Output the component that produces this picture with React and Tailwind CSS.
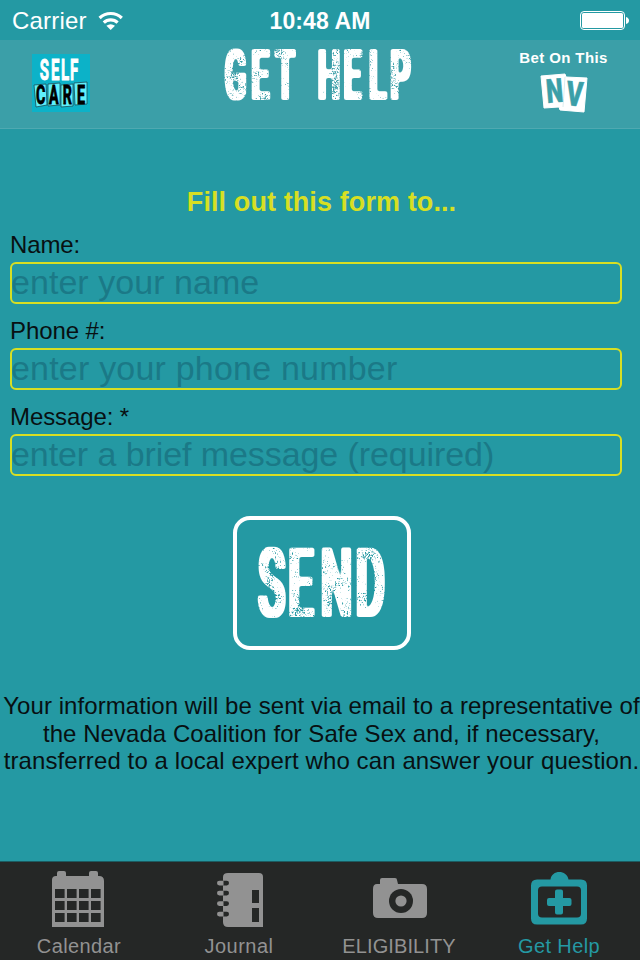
function Distress({ id, radius, seed }) {
  return (
    <filter id={id} x="-5%" y="-10%" width="110%" height="120%" colorInterpolationFilters="sRGB">
      <feMorphology in="SourceGraphic" operator="dilate" radius={radius} result="fat" />
      <feGaussianBlur in="fat" stdDeviation="1" result="soft" />
      <feComponentTransfer in="soft" result="round">
        <feFuncA type="linear" slope="3" intercept="-1" />
      </feComponentTransfer>
      <feTurbulence type="fractalNoise" baseFrequency="0.6" numOctaves="2" seed={seed} result="grain" />
      <feTurbulence type="fractalNoise" baseFrequency="0.07" numOctaves="1" seed={seed} result="patches" />
      <feComposite in="grain" in2="patches" operator="arithmetic" k1="0" k2="4.5" k3="4" k4="-2.7" result="mask" />
      <feComposite in="round" in2="mask" operator="in" />
    </filter>
  );
}

function SelfCareLogo() {
  return (
    <svg width="58" height="58" viewBox="0 0 58 58" className="block overflow-visible" fontFamily="Roboto, sans-serif" fontWeight="700">
      <rect width="58" height="58" fill="#0cb2c8" />
      <text transform="translate(0 26) scale(.5 1)" x="15.5 38 58 76" fontSize="30" fill="#fff" stroke="#fff" strokeWidth="1">SELF</text>
      <g fill="#5ff0fb" stroke="#1b4f59" strokeWidth=".8">
        <path d="M2 31l12-1 1 21-11 2z" />
        <path d="M16 30l12-1 0 22-12 1z" />
        <path d="M29 31l12-1 0 22-12 1z" />
        <path d="M42 29l13-1 0 22-12 1z" />
      </g>
      <text transform="translate(0 50) scale(.57 1)" x="7 30 54 79" fontSize="25" fill="#000" stroke="#000" strokeWidth=".9">CARE</text>
    </svg>
  );
}

function NvLogo() {
  return (
    <svg width="48" height="42" viewBox="0 0 48 42" className="block overflow-visible" fontFamily="Roboto, sans-serif" fontWeight="900">
      <path d="M1 3L25 1l1 3 21 1-3 34-24-2-1-3-15 1z" fill="#fff" stroke="#fff" strokeLinejoin="round" />
      <path d="M25 4l-2 30" stroke="#c4e1e4" strokeWidth=".6" />
      <g fill="#3b9fa8" stroke="#3b9fa8" strokeWidth=".6">
        <text transform="translate(7.2 30) rotate(-5) scale(.72 1)" fontSize="33">N</text>
        <text transform="translate(25.5 32) rotate(5) scale(.73 1)" fontSize="34">V</text>
      </g>
    </svg>
  );
}

function CalendarIcon() {
  return (
    <svg width="54" height="58" viewBox="0 0 54 58" fill="#929292">
      <path d="M1 57V10q0-4 4-4h1V3q0-2 2-2h5q2 0 2 2v3h23V3q0-2 2-2h5q2 0 2 2v3h1q5 0 5 5v46z" />
      <g fill="#252726">
        {[19, 31, 43].map((y) => [4, 16, 28, 40].map((x) => <rect key={x + "-" + y} x={x} y={y} width="9.6" height="9" />))}
      </g>
    </svg>
  );
}

function JournalIcon() {
  return (
    <svg width="46" height="54" viewBox="0 0 46 54">
      <path d="M11 0h31q4 0 4 4v50H11q-5 0-5-5V4q0-4 5-4z" fill="#929292" />
      <g>
        {[10, 20, 30.5, 41].map((y) => (
          <g key={y}>
            <rect x="0" y={y - 2.2} width="12" height="4.6" rx="2.3" fill="#252726" />
            <path d={`M6.5 ${y - 2.2}H2.3a2.3 2.3 0 0 0 0 4.600H6.5z`} fill="#929292" />
          </g>
        ))}
      </g>
      <path d="M35 17h7v13h-7zM35 35h7v14h-7z" fill="#252726" />
    </svg>
  );
}

function CameraIcon() {
  return (
    <svg width="54" height="41" viewBox="0 0 54 41">
      <path d="M4 6h3V2q0-2 2-2h13q2 0 2 2l1 4h24q5 0 5 5v24q0 5-5 5H5q-5 0-5-5V11q0-5 4-5z" fill="#929292" />
      <circle cx="28" cy="23" r="12" fill="#252726" />
      <circle cx="28" cy="23" r="5.6" fill="#929292" />
    </svg>
  );
}

function HelpIcon() {
  return (
    <svg width="56" height="53" viewBox="0 0 56 53" fill="#2499a3">
      <path d="M6 7.500h13.500c1-10 16.500-10 18 0h12.500q6 0 6 6v33q0 6-6 6H6q-6 0-6-6v-33q0-6 6-6z" />
      <rect x="7" y="14.500" width="43" height="31" rx="4" fill="#252726" />
      <path d="M26 17.500h4q2 0 2 2v6.500h6.500q2 0 2 2v4q0 2-2 2H32v6.500q0 2-2 2h-4q-2 0-2-2V34h-6q-2 0-2-2v-4q0-2 2-2h6v-6.500q0-2 2-2z" />
    </svg>
  );
}

function Field({ label, placeholder, spacing }) {
  return (
    <div className="h-[86px]">
      <div className="h-[32px] pt-[1px] text-[24px] leading-[28px] tracking-[-0.1px]">{label}</div>
      <div className={"h-[42px] w-[612px] rounded-md border-2 border-[#d7df23] text-[34px] leading-[37px] whitespace-nowrap text-[#1b7987] " + spacing}>
        <span className="-ml-[1px]">{placeholder}</span>
      </div>
    </div>
  );
}

function Tab({ icon, label, pad, text }) {
  return (
    <div className="flex w-[160px] flex-col items-center">
      <div className={"h-[72px] " + pad}>{icon}</div>
      <div className={"text-[20px] leading-[24px] whitespace-nowrap " + text}>{label}</div>
    </div>
  );
}

export default function App() {
  return (
    <div className="flex h-[960px] w-[640px] flex-col overflow-hidden bg-[#2499a3] font-['Liberation_Sans',Arial,sans-serif] text-[#081012]">
      <div className="grid h-[40px] shrink-0 grid-cols-3 items-center text-white">
        <div className="flex items-center gap-[11px] pl-[12px]">
          <span className="pt-[1px] text-[24px] leading-[40px] tracking-[0.2px]">Carrier</span>
          <svg width="26" height="20" viewBox="0 0 26 20" fill="none" stroke="#fff" strokeWidth="3.2">
            <path d="M1.6 7a16 16 0 0 1 22.2 0M5.8 11.6a10 10 0 0 1 13.8 0" />
            <path d="M12.700 19L8.400 14.800q4.300-3.200 8.600 0z" fill="#fff" stroke="none" />
          </svg>
        </div>
        <div className="pt-[1px] text-center text-[23px] leading-[40px] font-bold tracking-[0.1px] whitespace-nowrap">10:48 AM</div>
        <div className="flex justify-end pr-[10px]">
          <svg width="50" height="19" viewBox="0 0 50 19">
            <rect x=".5" y=".5" width="44" height="18" rx="3.500" fill="none" stroke="#fff" strokeWidth="1" />
            <rect x="2" y="2" width="41" height="15" rx="1.500" fill="#fff" />
            <path d="M46 6q3 1 3 3.500T46 13z" fill="#fff" />
          </svg>
        </div>
      </div>

      <header className="flex h-[89px] shrink-0 items-start border-b border-[#4fa9b1] bg-[#3b9fa8]">
        <div className="w-[215px] pt-[14px] pl-[32px]"><SelfCareLogo /></div>
        <svg width="205" height="80" viewBox="0 0 205 80" className="block overflow-visible">
          <Distress id="title-ink" radius="2 1" seed="4" />
          <g filter="url(#title-ink)">
            <text transform="translate(0 58.500) scale(.45 1)" x="22 81 135 195 229 286 343 390" fontFamily="Roboto, sans-serif" fontSize="69" fontWeight="500" fill="#fff">GET HELP</text>
          </g>
        </svg>
        <div className="flex w-[220px] flex-col items-center pt-[9px] pl-[67px]">
          <div className="text-[15px] leading-[18px] font-bold tracking-[0.4px] whitespace-nowrap text-white">Bet On This</div>
          <div className="pt-[6px]"><NvLogo /></div>
        </div>
      </header>

      <main className="flex h-[732px] shrink-0 flex-col">
        <h1 className="h-[101px] pt-[57px] pl-[3px] text-center text-[27px] leading-[32px] font-bold tracking-[0.1px] text-[#d7df23]">Fill out this form to...</h1>
        <div className="h-[258px] pl-[10px]">
          <Field label="Name:" placeholder="enter your name" spacing="tracking-[0.05px]" />
          <Field label="Phone #:" placeholder="enter your phone number" spacing="tracking-[0.2px]" />
          <Field label="Message: *" placeholder="enter a brief message (required)" spacing="tracking-[-0.08px]" />
        </div>
        <div className="flex h-[176px] justify-center pt-[28px] pl-[4px]">
          <div className="h-[134px] w-[178px] rounded-[17px] border-4 border-white">
            <svg width="170" height="126" viewBox="0 0 170 126" className="block">
              <Distress id="send-ink" radius="3 1" seed="9" />
              <g filter="url(#send-ink)">
                <text transform="translate(0 96) scale(.45 1)" x="49 115 187 265" fontFamily="Roboto, sans-serif" fontSize="95" fill="#fff">SEND</text>
              </g>
            </svg>
          </div>
        </div>
        <div className="flex flex-col items-center pt-[28px] pl-[3px] text-[24px] leading-[27.6px] whitespace-nowrap">
          <span className="tracking-[0.06px]">Your information will be sent via email to a representative of</span>
          <span className="tracking-[0.05px]">the Nevada Coalition for Safe Sex and, if necessary,</span>
          <span className="tracking-[0.1px]">transferred to a local expert who can answer your question.</span>
        </div>
      </main>

      <nav className="flex h-[99px] shrink-0 border-t border-[#1c5c61] bg-[#252726] text-[#929292]">
        <Tab icon={<CalendarIcon />} label="Calendar" pad="pt-[8px] pr-[4px]" text="pr-[2px] tracking-[0.4px]" />
        <Tab icon={<JournalIcon />} label="Journal" pad="pt-[11px]" text="pr-[2px] tracking-[0.5px]" />
        <Tab icon={<CameraIcon />} label="ELIGIBILITY" pad="pt-[16px]" text="pr-[2px] tracking-[0.1px]" />
        <Tab icon={<HelpIcon />} label="Get Help" pad="pt-[10px] pr-[2px]" text="pr-[2px] text-[#2499a3] tracking-[0.4px]" />
      </nav>
    </div>
  );
}
